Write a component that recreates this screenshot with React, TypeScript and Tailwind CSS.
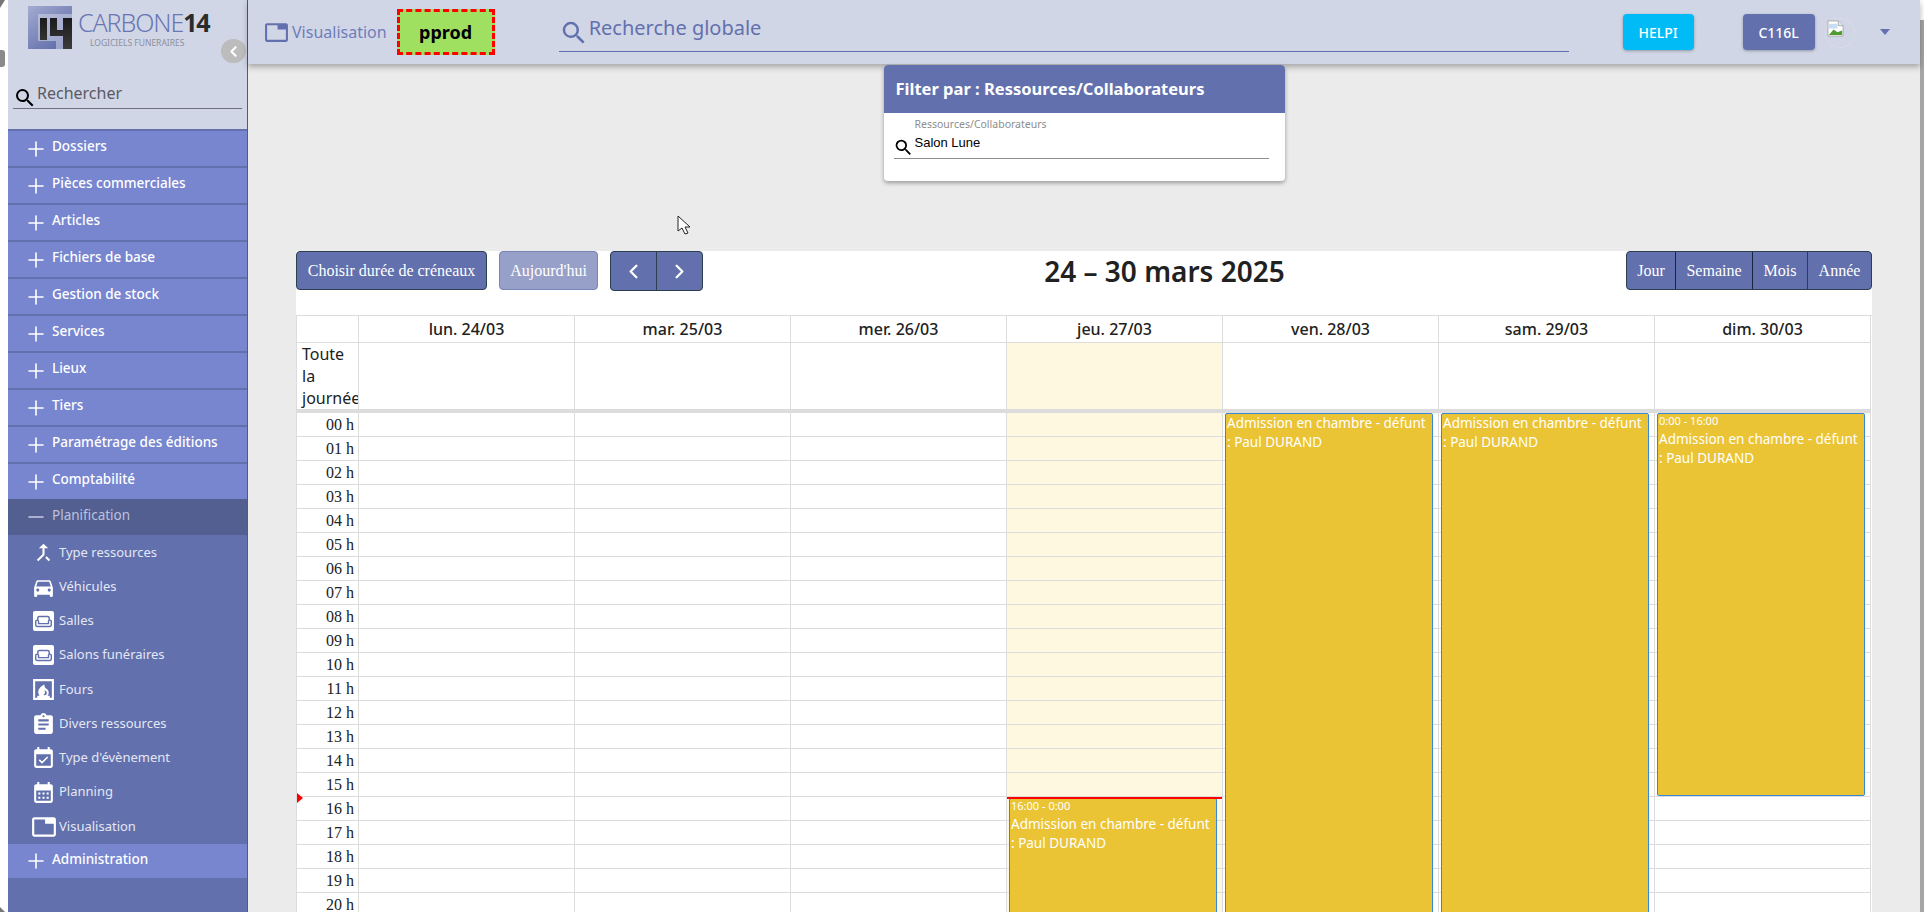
import { Plus, Minus, ChevronLeft, ChevronRight } from 'lucide-react'
import {
  MdSearch,
  MdCallMerge,
  MdDirectionsCar,
  MdOutlineWeekend,
  MdFireplace,
  MdAssignment,
  MdEventAvailable,
  MdCalendarMonth,
  MdTab,
} from 'react-icons/md'

const menuTop = [
  'Dossiers',
  'Pièces commerciales',
  'Articles',
  'Fichiers de base',
  'Gestion de stock',
  'Services',
  'Lieux',
  'Tiers',
  'Paramétrage des éditions',
  'Comptabilité',
]

const days = ['lun. 24/03', 'mar. 25/03', 'mer. 26/03', 'jeu. 27/03', 'ven. 28/03', 'sam. 29/03', 'dim. 30/03']
const hours = Array.from({ length: 24 }, (_, i) => String(i).padStart(2, '0') + ' h')

function BoxIcon({ children }: { children: React.ReactNode }) {
  return <span className="flex h-[20px] w-[21px] items-center justify-center rounded-[2px] bg-white text-[#6270ad]">{children}</span>
}

function SubItem({ icon, label, h }: { icon: React.ReactNode; label: string; h: string }) {
  return (
    <div className={`flex items-center pl-[25px] ${h}`}>
      <span className="flex w-[26px] shrink-0 items-center text-white">{icon}</span>
      <span className="text-[13px] text-[#e4e7f4]">{label}</span>
    </div>
  )
}

function Logo() {
  return (
    <svg width="44" height="43" viewBox="0 0 44 43" className="shrink-0">
      <defs>
        <linearGradient id="lg" x1="0" y1="0" x2="0.8" y2="1">
          <stop offset="0" stopColor="#a3abd0" />
          <stop offset="1" stopColor="#5d6aa8" />
        </linearGradient>
        <linearGradient id="dk" x1="0" y1="0" x2="0" y2="1">
          <stop offset="0" stopColor="#1b1b1b" />
          <stop offset="1" stopColor="#3c3c3c" />
        </linearGradient>
      </defs>
      <rect width="44" height="43" fill="url(#lg)" />
      <path d="M6 8h38v35H28v-8H10V8z" fill="#d1d6e7" opacity="0.55" />
      <path d="M12 12h7v22h-7zM22 12h7v12h6V12h9v31h-9V30H22z" fill="url(#dk)" />
    </svg>
  )
}

function BrokenImage() {
  return (
    <svg width="17" height="17" viewBox="0 0 18 18">
      <path d="M1 1h11l5 5v11H1z" fill="#fff" stroke="#a9a9a9" />
      <path d="M12 1v5h5" fill="#dfe8f5" stroke="#a9a9a9" />
      <path d="M2 4h9v5H2z" fill="#c8dcf4" />
      <path d="M2 16l5-6 4 3 5-2v5z" fill="#4f9b2f" />
    </svg>
  )
}

function EventCard({ time, className }: { time?: string; className: string }) {
  return (
    <div className={`absolute left-[2px] w-[208px] rounded-[2px] border border-[#3788d8] bg-[#ebc435] px-[1px] font-['Noto_Sans',sans-serif] text-white ${className}`}>
      {time && <div className="mb-[3px] text-[11px] leading-[13px]">{time}</div>}
      <div className="text-[13.5px] leading-[19px]">Admission en chambre - défunt : Paul DURAND</div>
    </div>
  )
}

export default function App() {
  const fcBtn = "rounded-[4px] border border-[#2c3e50] bg-[#6270ad] text-white font-['Liberation_Serif',serif] text-[16px]"
  return (
    <div className="relative flex h-[912px] w-[1924px] overflow-hidden bg-white font-['Noto_Sans',sans-serif]">
      {/* browser resize marks on the far left */}
      <div className="absolute left-0 top-0 h-0 w-0 border-r-[5px] border-t-[8px] border-r-transparent border-t-[#777]" />
      <div className="absolute left-0 top-[50px] h-[17px] w-[5px] rounded-r-[3px] bg-[#8a8a8a]" />
      <div className="absolute bottom-0 left-0 h-0 w-0 border-b-[5px] border-r-[5px] border-b-[#777] border-r-transparent" />

      <div className="w-[8px] shrink-0" />

      <aside className="relative flex w-[240px] shrink-0 flex-col border-r border-[#4d5990] bg-[#6270ad]">
        <div className="relative h-[129px] shrink-0 bg-[#d1d6e7]">
          <div className="flex pl-[20px] pt-[6px]">
            <Logo />
            <div className="ml-[6px] w-[140px]">
              <div className="whitespace-nowrap text-[25px] leading-[32px] tracking-[-1.1px] text-[#6a77b4] font-light">
                CARBONE<span className="font-bold text-[#2b2b2b]">14</span>
              </div>
              <div className="ml-[12px] whitespace-nowrap text-[8.5px] leading-[10px] text-[#8c8f9c]">LOGICIELS FUNERAIRES</div>
            </div>
          </div>
          <div className="absolute right-[1px] top-[39px] flex h-[24px] w-[25px] items-center justify-center rounded-full bg-[#bcbcbc] text-white">
            <ChevronLeft size={17} strokeWidth={3} />
          </div>
          <div className="absolute bottom-[20px] left-[5px] right-[5px] flex h-[24px] items-center border-b border-[#6f6f80]">
            <MdSearch size={24} className="mt-[3px] shrink-0 text-black" />
            <span className="mb-[7px] text-[16px] text-[#5a5a62]">Rechercher</span>
          </div>
        </div>

        {menuTop.map((m) => (
          <div key={m} className="flex h-[37px] shrink-0 items-center border-t-2 border-[#6270ad] bg-[#7886d0] pl-[16px]">
            <Plus size={24} strokeWidth={1.6} className="mr-[4px] shrink-0 text-white" />
            <span className="mb-[5px] text-[13.5px] font-medium text-white">{m}</span>
          </div>
        ))}
        <div className="flex h-[36px] shrink-0 items-center bg-[#535e91] pl-[16px]">
          <Minus size={24} strokeWidth={1.6} className="mr-[4px] shrink-0 text-[#c9cde2]" />
          <span className="mb-[3px] text-[13.5px] text-[#bcc2dc]">Planification</span>
        </div>
        <div className="flex flex-col">
          <SubItem h="h-[35px]" icon={<MdCallMerge size={25} className="-ml-[2px] shrink-0" />} label="Type ressources" />
          <SubItem h="h-[34px]" icon={<MdDirectionsCar size={25} className="-ml-[2px] shrink-0" />} label="Véhicules" />
          <SubItem h="h-[34px]" icon={<BoxIcon><MdOutlineWeekend size={17} /></BoxIcon>} label="Salles" />
          <SubItem h="h-[34px]" icon={<BoxIcon><MdOutlineWeekend size={17} /></BoxIcon>} label="Salons funéraires" />
          <SubItem h="h-[35px]" icon={<MdFireplace size={25} className="-ml-[2px] shrink-0" />} label="Fours" />
          <SubItem h="h-[34px]" icon={<MdAssignment size={25} className="-ml-[2px] shrink-0" />} label="Divers ressources" />
          <SubItem h="h-[34px]" icon={<MdEventAvailable size={25} className="-ml-[2px] shrink-0" />} label="Type d'évènement" />
          <SubItem h="h-[34px]" icon={<MdCalendarMonth size={25} className="-ml-[2px] shrink-0" />} label="Planning" />
          <SubItem h="h-[35px]" icon={<MdTab size={26} className="-ml-[2px] shrink-0" />} label="Visualisation" />
        </div>
        <div className="flex h-[34px] shrink-0 items-center bg-[#7886d0] pl-[16px]">
          <Plus size={24} strokeWidth={1.6} className="mr-[4px] shrink-0 text-white" />
          <span className="mb-[3px] text-[13.5px] font-medium text-white">Administration</span>
        </div>
      </aside>

      <main className="flex min-w-0 flex-1 flex-col bg-[#ebebeb]">
        <header className="relative z-10 flex h-[64px] shrink-0 items-center bg-[#d1d6e7] pl-[16px] shadow-[0_3px_6px_rgba(0,0,0,0.3)]">
          <MdTab size={25} className="shrink-0 text-[#6270ad]" />
          <span className="ml-[3px] text-[16px] text-[#6f7db8]">Visualisation</span>
          <div className="ml-[10px] flex h-[46px] w-[98px] items-center justify-center border-[3px] border-dashed border-[#f00] bg-[#9fe060] text-[18px] font-bold text-black">
            pprod
          </div>
          <div className="ml-[64px] flex h-[39px] w-[1010px] items-center border-b border-[#6270ad] pb-[1px]">
            <MdSearch size={30} className="mt-[3px] shrink-0 text-[#6270ad]" />
            <span className="mb-[6px] text-[20px] text-[#6270ad]">Recherche globale</span>
          </div>
          <button className="ml-[54px] h-[36px] w-[71px] rounded-[4px] bg-[#00bbf5] text-[14px] font-medium text-white shadow-[0_1px_3px_rgba(0,0,0,0.3)]">HELPI</button>
          <button className="ml-[49px] h-[36px] w-[72px] rounded-[4px] bg-[#6270ad] text-[14px] font-medium text-white shadow-[0_1px_3px_rgba(0,0,0,0.3)]">C116L</button>
          <div className="ml-[10px] mt-[2px] h-[30px] w-[30px] rounded-full border border-dashed border-[#dcdfeb] pl-[1px] pt-[1px]"><BrokenImage /></div>
          <div className="ml-[25px] h-0 w-0 border-l-[5px] border-r-[5px] border-t-[6px] border-l-transparent border-r-transparent border-t-[#6270ad]" />
        </header>

        <div className="z-20 mx-auto mt-[1px] h-[116px] w-[401px] shrink-0 overflow-hidden rounded-[4px] bg-white shadow-[0_2px_4px_rgba(0,0,0,0.35)]">
          <div className="flex h-[48px] items-center bg-[#6270ad] pl-[12px] text-[16.5px] font-bold text-white">Filter par : Ressources/Collaborateurs</div>
          <div className="relative mx-[10px] mt-[4px] h-[42px] w-[375px] border-b border-[#8c8c8c] pl-[21px]">
            <div className="text-[10.5px] leading-[14px] text-[#8d8d8d]">Ressources/Collaborateurs</div>
            <div className="mt-[3px] text-[13px] leading-[18px] text-black font-['Liberation_Sans',sans-serif]">Salon Lune</div>
            <MdSearch size={21} className="absolute -left-[1px] top-[20px] text-black" />
          </div>
        </div>

        <div className="relative mx-[48px] mt-[70px] flex-1 bg-white">
          {/* stray mouse pointer from the capture */}
          <svg width="14" height="20" viewBox="0 0 14 20" className="absolute -top-[36px] left-[381px]">
            <path d="M1 1v15l4-3 3 6 3-1-3-6h5z" fill="#fff" stroke="#222" />
          </svg>

          <div className="flex h-[64px] items-start justify-between">
            <div className="flex items-start">
              <button className={`${fcBtn} h-[39px] w-[191px]`}>Choisir durée de créneaux</button>
              <button className="ml-[12px] h-[39px] w-[99px] rounded-[4px] border border-[#7a86b5] bg-[#97a0c8] font-['Liberation_Serif',serif] text-[16px] text-white">Aujourd'hui</button>
              <div className="ml-[12px] flex h-[40px] w-[93px] overflow-hidden rounded-[4px] border border-[#2c3e50] bg-[#6270ad] text-white">
                <span className="flex w-[46px] items-center justify-center border-r border-[#2c3e50]"><ChevronLeft size={23} strokeWidth={2.4} /></span>
                <span className="flex flex-1 items-center justify-center"><ChevronRight size={23} strokeWidth={2.4} /></span>
              </div>
            </div>
            <h2 className="text-[28px] font-semibold leading-[40px] text-[#212121]">24 – 30 mars 2025</h2>
            <div className="flex h-[39px] w-[246px] overflow-hidden rounded-[4px] border border-[#2c3e50] bg-[#6270ad] font-['Liberation_Serif',serif] text-[16px] text-white">
              <span className="flex w-[49px] items-center justify-center border-r border-[#1a2540]">Jour</span>
              <span className="flex w-[77px] items-center justify-center border-r border-[#1a2540]">Semaine</span>
              <span className="flex w-[55px] items-center justify-center border-r border-[#2c3e50]">Mois</span>
              <span className="flex flex-1 items-center justify-center">Année</span>
            </div>
          </div>

          <div className="grid grid-cols-[62px_repeat(7,216px)] border-l border-t border-[#dcdcdc] text-[#212121]">
            <div className="h-[27px] border-b border-r border-[#dcdcdc]" />
            {days.map((d) => (
              <div key={d} className="flex h-[27px] items-center justify-center border-b border-r border-[#dcdcdc] text-[16px] font-medium">{d}</div>
            ))}
            <div className="h-[70px] overflow-hidden border-b-[4px] border-r border-[#dcdcdc] pl-[5px] text-[16px] leading-[22px]">Toute la journée</div>
            {days.map((d, i) => (
              <div key={d} className={`h-[70px] border-b-[4px] border-r border-[#dcdcdc] ${i === 3 ? 'bg-[#fff8e1]' : ''}`} />
            ))}

            <div className="flex flex-col border-r border-[#dcdcdc]">
              {hours.map((h) => (
                <div key={h} className="h-[24px] shrink-0 border-b border-[#dcdcdc] pr-[4px] text-right font-['Liberation_Serif',serif] text-[16px] leading-[24px]">{h}</div>
              ))}
            </div>
            {days.map((d, i) => (
              <div key={d} className={`relative flex flex-col border-r border-[#dcdcdc] ${i === 3 ? 'bg-[#fff8e1]' : ''}`}>
                {hours.map((h) => (
                  <div key={h} className="h-[24px] shrink-0 border-b border-[#dcdcdc]" />
                ))}
                {i === 3 && <EventCard time="16:00 - 0:00" className="top-[385px] h-[190px]" />}
                {i === 3 && <div className="absolute left-0 right-0 top-[384px] h-[2px] bg-[#f00]" />}
                {i === 4 && <EventCard className="top-0 h-[576px]" />}
                {i === 5 && <EventCard className="top-0 h-[576px]" />}
                {i === 6 && <EventCard time="0:00 - 16:00" className="top-0 h-[383px]" />}
              </div>
            ))}
          </div>
          <div className="absolute left-[1px] top-[542px] h-0 w-0 border-b-[5px] border-l-[6px] border-t-[5px] border-b-transparent border-l-[#f00] border-t-transparent" />
        </div>
      </main>

      <div className="flex w-[4px] shrink-0 flex-col bg-white">
        <div className="mt-[20px] flex-1 bg-[#a6a6a6]" />
      </div>
    </div>
  )
}
